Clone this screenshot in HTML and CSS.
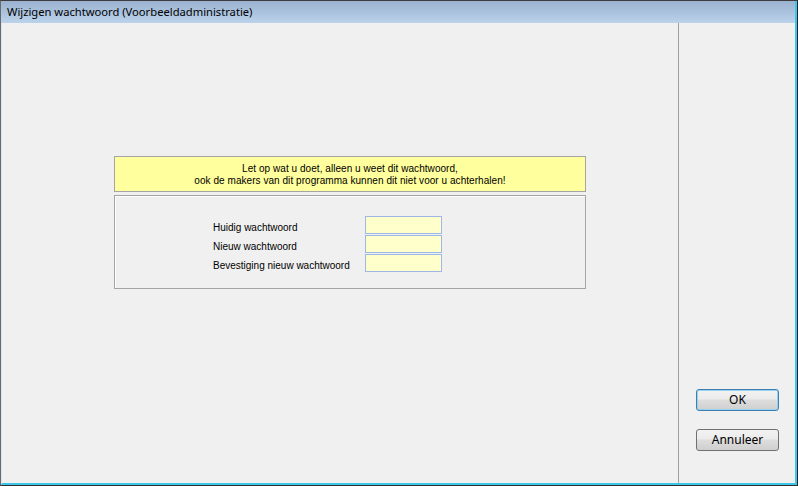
FILE: index.html
```html
<!DOCTYPE html>
<html lang="nl">
<head>
<meta charset="utf-8">
<title>Wijzigen wachtwoord</title>
<link rel="stylesheet" href="styles.css">
</head>
<body>
<div class="window">
  <div class="titlebar">Wijzigen wachtwoord (Voorbeeldadministratie)</div>
  <div class="content">
    <div class="main">
      <div class="notice">
        <div>Let op wat u doet, alleen u weet dit wachtwoord,</div>
        <div>ook de makers van dit programma kunnen dit niet voor u achterhalen!</div>
      </div>
      <div class="panel">
        <div class="form">
          <label class="label">Huidig wachtwoord</label>
          <input class="field" type="password">
          <label class="label">Nieuw wachtwoord</label>
          <input class="field" type="password">
          <label class="label">Bevestiging nieuw wachtwoord</label>
          <input class="field" type="password">
        </div>
      </div>
    </div>
    <div class="side">
      <button class="btn btn-default">OK</button>
      <button class="btn">Annuleer</button>
    </div>
  </div>
</div>
</body>
</html>
```
FILE: styles.css
```css
html, body {
  margin: 0;
  padding: 0;
  background: #f0f0f0;
}
.window {
  width: 798px;
  height: 486px;
  box-sizing: border-box;
  display: flex;
  flex-direction: column;
  border-top: 1px solid #3c3c3c;
  border-right: 1px solid #202020;
  border-bottom: 1px solid #303030;
  border-left: 1px solid #6a6a6a;
  background: #f0f0f0;
}
.titlebar {
  height: 22px;
  box-sizing: border-box;
  padding: 3px 0 0 6px;
  background: linear-gradient(#9ab2d0, #bbd2eb);
  border-right: 2px solid #3cc6e8;
  font-family: "Noto Sans", "Liberation Sans", sans-serif;
  font-size: 11.2px;
  line-height: 16px;
  color: #000;
}
.content {
  flex: 1;
  display: flex;
  border-left: 1px solid #d8e6f4;
  border-right: 2px solid #3cc6e8;
  border-bottom: 2px solid #3cc6e8;
}
.main {
  width: 677px;
  padding: 133px 0 0 112px;
  box-sizing: border-box;
  border-right: 1px solid #a0a0a0;
}
.notice {
  width: 472px;
  height: 36px;
  box-sizing: border-box;
  border: 1px solid #a5a5a5;
  background: #ffff9e;
  text-align: center;
  font-family: "Liberation Sans", sans-serif;
  font-size: 10px;
  letter-spacing: 0.05px;
  line-height: 12px;
  padding-top: 6px;
  color: #000;
  white-space: nowrap;
}
.panel {
  margin-top: 3px;
  width: 472px;
  height: 94px;
  box-sizing: border-box;
  border: 1px solid #a5a5a5;
  box-shadow: inset 1px 1px 0 #ffffff;
  padding: 20px 0 0 98px;
}
.form {
  display: grid;
  grid-template-columns: 152px 77px;
  grid-auto-rows: 18px;
  row-gap: 1px;
}
.label {
  font-family: "Liberation Sans", sans-serif;
  font-size: 10px;
  line-height: 12px;
  align-self: end;
  padding-bottom: 0;
  color: #000;
  white-space: nowrap;
}
.field {
  width: 77px;
  height: 18px;
  box-sizing: border-box;
  margin: 0;
  border: 1px solid #9db7e8;
  background: #ffffcc;
  outline: none;
  padding: 0 2px;
}
.side {
  flex: 1;
  display: flex;
  flex-direction: column;
  padding: 366px 0 0 17px;
  gap: 18px;
}
.btn {
  width: 83px;
  height: 22px;
  box-sizing: border-box;
  border: 1px solid #707070;
  border-radius: 3px;
  background: linear-gradient(#f2f2f2 0%, #ebebeb 45%, #dddddd 50%, #cfcfcf 100%);
  font-family: "Noto Sans", "Liberation Sans", sans-serif;
  font-size: 12px;
  color: #000;
  padding: 0;
  line-height: 18px;
}
.btn-default {
  border-color: #3c7fb1;
  box-shadow: inset 0 0 0 1px #98d1ef;
}
```
